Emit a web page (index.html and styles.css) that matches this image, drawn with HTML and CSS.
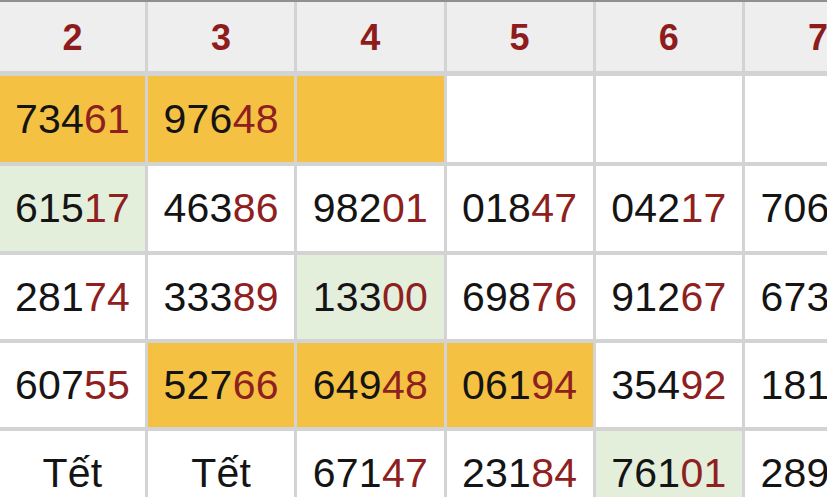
FILE: index.html
```html
<!DOCTYPE html>
<html lang="vi">
<head>
<meta charset="utf-8">
<link rel="stylesheet" href="styles.css">
</head>
<body>
<div class="board">
  <div class="cell head">2</div>
  <div class="cell head">3</div>
  <div class="cell head">4</div>
  <div class="cell head">5</div>
  <div class="cell head">6</div>
  <div class="cell head">7</div>

  <div class="cell gold">734<span class="tail">61</span></div>
  <div class="cell gold">976<span class="tail">48</span></div>
  <div class="cell gold"></div>
  <div class="cell"></div>
  <div class="cell"></div>
  <div class="cell"></div>

  <div class="cell mint">615<span class="tail">17</span></div>
  <div class="cell">463<span class="tail">86</span></div>
  <div class="cell">982<span class="tail">01</span></div>
  <div class="cell">018<span class="tail">47</span></div>
  <div class="cell">042<span class="tail">17</span></div>
  <div class="cell">706<span class="tail">58</span></div>

  <div class="cell">281<span class="tail">74</span></div>
  <div class="cell">333<span class="tail">89</span></div>
  <div class="cell mint">133<span class="tail">00</span></div>
  <div class="cell">698<span class="tail">76</span></div>
  <div class="cell">912<span class="tail">67</span></div>
  <div class="cell">673<span class="tail">12</span></div>

  <div class="cell">607<span class="tail">55</span></div>
  <div class="cell gold">527<span class="tail">66</span></div>
  <div class="cell gold">649<span class="tail">48</span></div>
  <div class="cell gold">061<span class="tail">94</span></div>
  <div class="cell">354<span class="tail">92</span></div>
  <div class="cell">181<span class="tail">23</span></div>

  <div class="cell">Tết</div>
  <div class="cell">Tết</div>
  <div class="cell">671<span class="tail">47</span></div>
  <div class="cell">231<span class="tail">84</span></div>
  <div class="cell mint">761<span class="tail">01</span></div>
  <div class="cell">289<span class="tail">35</span></div>
</div>
</body>
</html>
```

FILE: styles.css
```css
html, body {
  margin: 0;
  padding: 0;
  overflow: hidden;
  background: #ffffff;
}

body {
  width: 827px;
  height: 497px;
  font-family: "Liberation Sans", Arial, sans-serif;
}

.board {
  display: grid;
  grid-template-columns: 145px repeat(5, 146.25px);
  grid-template-rows: 70px 86px 85px 84px 84px 85px;
  column-gap: 3px;
  row-gap: 4px;
  width: max-content;
  background: #d3d3d3;
  border-top: 2px solid #8f8f8f;
}

.cell {
  display: flex;
  align-items: center;
  justify-content: center;
  background: #ffffff;
  color: #141414;
  font-size: 41px;
  letter-spacing: 0.2px;
}

.head {
  background: #eeeeee;
  border-bottom: 1px solid #d3d3d3;
  color: #8e1c1c;
  font-weight: bold;
  font-size: 36px;
  padding-top: 2px;
  box-sizing: border-box;
}

.gold {
  background: #f4c142;
}

.mint {
  background: #e3eedb;
}

.tail {
  color: #8f2020;
}
```
